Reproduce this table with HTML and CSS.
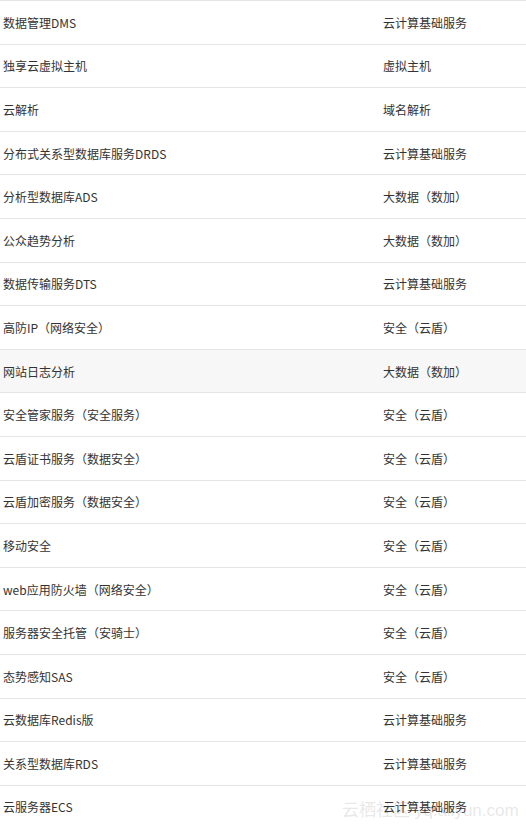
FILE: index.html
```html
<!DOCTYPE html>
<html lang="zh">
<head>
<meta charset="utf-8">
<link rel="stylesheet" href="styles.css">
</head>
<body>
<div class="page">
<div class="list">
  <div class="row"><span class="name">数据管理DMS</span><span class="cat">云计算基础服务</span></div>
  <div class="row"><span class="name">独享云虚拟主机</span><span class="cat">虚拟主机</span></div>
  <div class="row"><span class="name">云解析</span><span class="cat">域名解析</span></div>
  <div class="row"><span class="name">分布式关系型数据库服务DRDS</span><span class="cat">云计算基础服务</span></div>
  <div class="row"><span class="name">分析型数据库ADS</span><span class="cat">大数据（数加）</span></div>
  <div class="row"><span class="name">公众趋势分析</span><span class="cat">大数据（数加）</span></div>
  <div class="row"><span class="name">数据传输服务DTS</span><span class="cat">云计算基础服务</span></div>
  <div class="row"><span class="name">高防IP（网络安全）</span><span class="cat">安全（云盾）</span></div>
  <div class="row hover"><span class="name">网站日志分析</span><span class="cat">大数据（数加）</span></div>
  <div class="row"><span class="name">安全管家服务（安全服务）</span><span class="cat">安全（云盾）</span></div>
  <div class="row"><span class="name">云盾证书服务（数据安全）</span><span class="cat">安全（云盾）</span></div>
  <div class="row"><span class="name">云盾加密服务（数据安全）</span><span class="cat">安全（云盾）</span></div>
  <div class="row"><span class="name">移动安全</span><span class="cat">安全（云盾）</span></div>
  <div class="row"><span class="name">web应用防火墙（网络安全）</span><span class="cat">安全（云盾）</span></div>
  <div class="row"><span class="name">服务器安全托管（安骑士）</span><span class="cat">安全（云盾）</span></div>
  <div class="row"><span class="name">态势感知SAS</span><span class="cat">安全（云盾）</span></div>
  <div class="row"><span class="name">云数据库Redis版</span><span class="cat">云计算基础服务</span></div>
  <div class="row"><span class="name">关系型数据库RDS</span><span class="cat">云计算基础服务</span></div>
  <div class="row"><span class="name">云服务器ECS</span><span class="cat">云计算基础服务</span></div>
</div>
<div class="watermark">云栖社区 yq.aliyun.com</div>
</div>
</body>
</html>
```

FILE: styles.css
```css
html, body {
  margin: 0;
  padding: 0;
  background: #fff;
  overflow: hidden;
}
body {
  font-family: "Noto Sans CJK SC", "Liberation Sans", sans-serif;
  font-size: 12px;
  color: #333;
}
.page {
  position: relative;
  width: 526px;
  overflow: hidden;
}
.list {
  position: relative;
  z-index: 1;
  border-top: 1px solid #e5e5e5;
}
.row {
  display: grid;
  grid-template-columns: 380px 1fr;
  height: 42.6px;
  align-items: center;
  border-bottom: 1px solid #e5e5e5;
}
.row.hover {
  background: #f7f7f7;
}
.name {
  padding-left: 3px;
}
.cat {
  padding-left: 3px;
}
.watermark {
  position: absolute;
  z-index: 0;
  left: 342px;
  top: 796px;
  font-family: "Liberation Sans", "Noto Sans CJK SC", sans-serif;
  font-size: 17px;
  color: rgba(210, 210, 210, 0.5);
  pointer-events: none;
  white-space: nowrap;
}
```
